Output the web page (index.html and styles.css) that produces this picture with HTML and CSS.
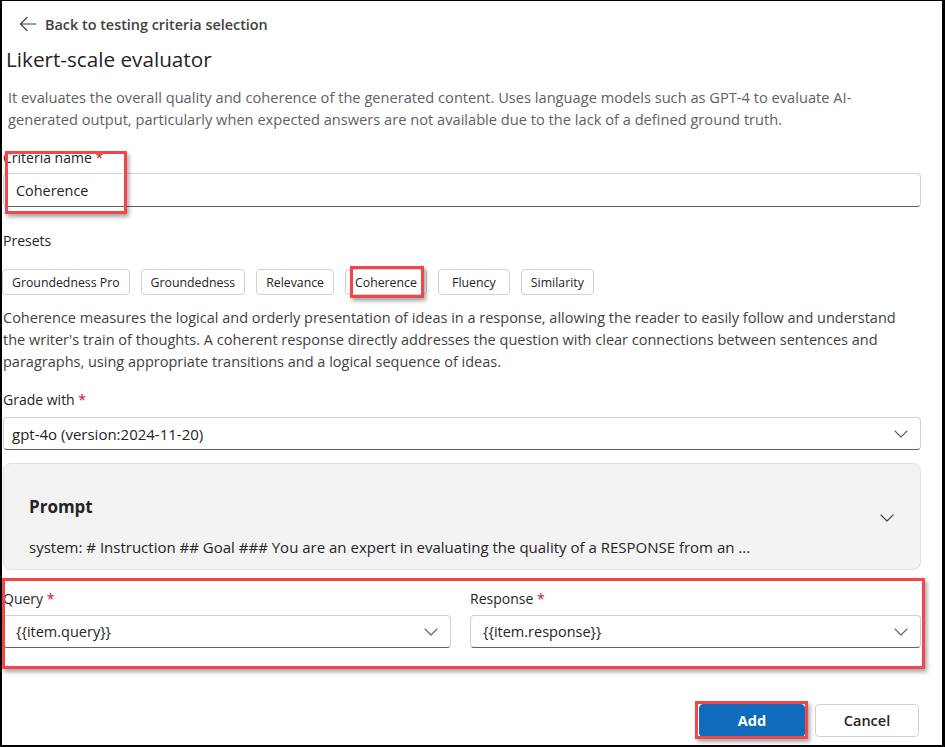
FILE: index.html
```html
<!DOCTYPE html>
<html lang="en">
<head>
<meta charset="utf-8">
<title>Likert-scale evaluator</title>
<link rel="stylesheet" href="styles.css">
</head>
<body>
<div class="frame">
  <div class="page">
    <div class="back">
      <svg class="back-icon" width="20" height="20" viewBox="0 0 20 20"><path d="M9 3.5 L2.5 10 L9 16.5 M2.8 10 H18" fill="none" stroke="#424242" stroke-width="1.2" stroke-linecap="round" stroke-linejoin="round"/></svg>
      <span>Back to testing criteria selection</span>
    </div>
    <h1 class="title">Likert-scale evaluator</h1>
    <p class="desc">It evaluates the overall quality and coherence of the generated content. Uses language models such as GPT-4 to evaluate AI-<br>generated output, particularly when expected answers are not available due to the lack of a defined ground truth.</p>

    <label class="label label-criteria">Criteria name <span class="req">*</span></label>
    <div class="input">Coherence</div>

    <div class="label label-presets">Presets</div>
    <div class="chips">
      <span class="chip">Groundedness Pro</span>
      <span class="chip">Groundedness</span>
      <span class="chip">Relevance</span>
      <span class="chip">Coherence</span>
      <span class="chip">Fluency</span>
      <span class="chip">Similarity</span>
    </div>
    <p class="para">Coherence measures the logical and orderly presentation of ideas in a response, allowing the reader to easily follow and understand<br>the writer's train of thoughts. A coherent response directly addresses the question with clear connections between sentences and<br>paragraphs, using appropriate transitions and a logical sequence of ideas.</p>

    <label class="label label-grade">Grade with <span class="req">*</span></label>
    <div class="select">
      <span>gpt-4o (version:2024-11-20)</span>
      <svg class="chev" width="14" height="8" viewBox="0 0 14 8"><path d="M1 1 L7 7 L13 1" fill="none" stroke="#616161" stroke-width="1.1" stroke-linecap="round" stroke-linejoin="round"/></svg>
    </div>

    <div class="card">
      <div class="card-text">
        <div class="card-title">Prompt</div>
        <div class="card-body">system: # Instruction ## Goal ### You are an expert in evaluating the quality of a RESPONSE from an ...</div>
      </div>
      <svg class="chev card-chev" width="14" height="8" viewBox="0 0 14 8"><path d="M1 1 L7 7 L13 1" fill="none" stroke="#424242" stroke-width="1.1" stroke-linecap="round" stroke-linejoin="round"/></svg>
    </div>

    <div class="mapping">
      <div class="field">
        <label class="label">Query <span class="req">*</span></label>
        <div class="select select-map">
          <span>{{item.query}}</span>
          <svg class="chev" width="14" height="8" viewBox="0 0 14 8"><path d="M1 1 L7 7 L13 1" fill="none" stroke="#616161" stroke-width="1.1" stroke-linecap="round" stroke-linejoin="round"/></svg>
        </div>
      </div>
      <div class="field">
        <label class="label">Response <span class="req">*</span></label>
        <div class="select select-map">
          <span>{{item.response}}</span>
          <svg class="chev" width="14" height="8" viewBox="0 0 14 8"><path d="M1 1 L7 7 L13 1" fill="none" stroke="#616161" stroke-width="1.1" stroke-linecap="round" stroke-linejoin="round"/></svg>
        </div>
      </div>
    </div>

    <div class="actions">
      <button class="btn btn-primary">Add</button>
      <button class="btn btn-secondary">Cancel</button>
    </div>
  </div>

  <div class="mark mark-criteria"></div>
  <div class="mark mark-chip"></div>
  <div class="mark mark-map"></div>
  <div class="mark mark-add"></div>
</div>
</body>
</html>
```

FILE: styles.css
```css
* { box-sizing: border-box; }
html, body { margin: 0; padding: 0; background: #fff; }
body {
  font-family: "Open Sans", "Noto Sans", Arial, sans-serif;
  color: #242424;
  font-size: 14px;
}
.frame {
  position: relative;
  width: 945px;
  height: 747px;
  border-style: solid;
  border-color: #000;
  border-width: 1px 3px 2px 2px;
  overflow: hidden;
}
.page {
  padding: 0 21px 0 1px;
}
.back {
  display: flex;
  align-items: center;
  gap: 7px;
  margin-top: 13px;
  height: 20px;
  padding-left: 15px;
  font-size: 14.4px;
  font-weight: 600;
  color: #424242;
}
.back-icon { display: block; }
.title {
  margin: 10px 0 0;
  padding-left: 3px;
  font-size: 20.7px;
  font-weight: 400;
  line-height: 30px;
  color: #242424;
}
.desc {
  margin: 12px 0 0;
  padding-left: 5px;
  font-size: 14.65px;
  line-height: 22px;
  color: #616161;
}
.label {
  display: block;
  font-size: 14px;
  line-height: 20px;
  color: #242424;
}
.req { color: #c50f1f; }
.label-criteria { margin-top: 18px; }
.input {
  margin-top: 5px;
  height: 34px;
  border: 1px solid #d1d1d1;
  border-bottom-color: #616161;
  border-radius: 4px;
  padding-left: 12px;
  display: flex;
  align-items: center;
  font-size: 14.4px;
}
.label-presets { margin-top: 24px; }
.chips {
  display: flex;
  gap: 11px;
  margin-top: 18px;
  margin-left: -1px;
}
.chip {
  height: 26px;
  min-width: 72px;
  padding: 0 9px;
  border: 1px solid #d1d1d1;
  border-radius: 4px;
  font-size: 12.3px;
  display: flex;
  align-items: center;
  justify-content: center;
  color: #242424;
}
.para {
  margin: 12px 0 0;
  font-size: 14.5px;
  line-height: 22px;
  color: #424242;
}
.label-grade { margin-top: 17px; }
.select {
  margin-top: 7px;
  height: 33px;
  border: 1px solid #d1d1d1;
  border-bottom-color: #616161;
  border-radius: 4px;
  padding: 0 12px 0 8px;
  display: flex;
  align-items: center;
  justify-content: space-between;
  font-size: 15px;
}
.chev { display: block; }
.card {
  margin-top: 13px;
  height: 107px;
  background: #f3f3f3;
  border: 1px solid #e0e0e0;
  border-radius: 8px;
  padding: 0 26px 0 25px;
  display: flex;
  align-items: center;
  justify-content: space-between;
}
.card-text { padding-top: 18px; }
.card-title {
  font-size: 17px;
  font-weight: 700;
  line-height: 24px;
}
.card-body {
  margin-top: 18px;
  font-size: 15px;
  line-height: 20px;
}
.card-chev { margin-top: 2px; }
.mapping {
  display: grid;
  grid-template-columns: 448px 1fr;
  column-gap: 19px;
  margin-top: 19px;
}
.field .label { line-height: 20px; }
.select-map {
  margin-top: 6px;
  padding-left: 12px;
  font-size: 14.5px;
}
.actions {
  display: flex;
  justify-content: flex-end;
  gap: 10px;
  margin-top: 56px;
  padding-right: 2px;
}
.btn {
  height: 33px;
  border-radius: 4px;
  font-family: inherit;
  font-size: 14.5px;
  font-weight: 600;
}
.btn-primary {
  width: 106px;
  background: #0f6cbd;
  color: #fff;
  border: 1px solid #0f6cbd;
  font-weight: 700;
}
.btn-secondary {
  width: 104px;
  background: #fff;
  color: #242424;
  border: 1px solid #d1d1d1;
}
.mark {
  position: absolute;
  border: 3px solid #f0474a;
  box-shadow: 2px 3px 4px rgba(0, 0, 0, 0.35);
  pointer-events: none;
}
.mark-criteria { left: 3px; top: 150px; width: 122px; height: 63px; }
.mark-chip { left: 348px; top: 265px; width: 74px; height: 32px; }
.mark-map { left: 0; top: 577px; width: 923px; height: 91px; }
.mark-add { left: 693px; top: 700px; width: 113px; height: 38px; }
```
